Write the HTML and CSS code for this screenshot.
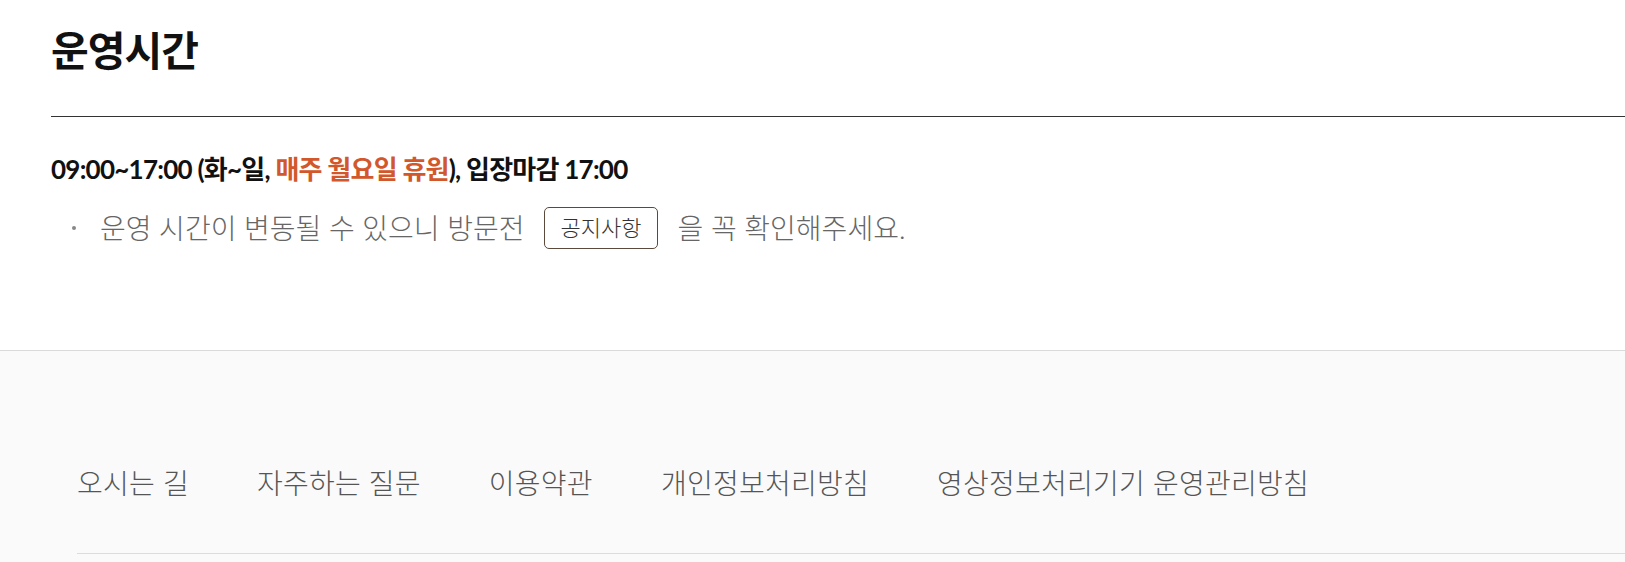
FILE: index.html
```html
<!DOCTYPE html>
<html lang="ko">
<head>
<meta charset="utf-8">
<title>운영시간</title>
<link rel="stylesheet" href="styles.css">
</head>
<body>
<main class="hours">
  <h2 class="hours-title">운영시간</h2>
  <div class="hours-body">
    <p class="hours-main">09:00~17:00 (화~일, <span class="closed">매주 월요일 휴원</span>), 입장마감 17:00</p>
    <ul class="hours-notes">
      <li class="note">운영 시간이 변동될 수 있으니 방문전 <a class="notice-btn" href="#">공지사항</a> 을 꼭 확인해주세요.</li>
    </ul>
  </div>
</main>
<footer class="footer">
  <nav class="footer-nav">
    <a class="footer-link" href="#">오시는 길</a>
    <a class="footer-link" href="#">자주하는 질문</a>
    <a class="footer-link" href="#">이용약관</a>
    <a class="footer-link" href="#">개인정보처리방침</a>
    <a class="footer-link" href="#">영상정보처리기기 운영관리방침</a>
  </nav>
</footer>
</body>
</html>
```
FILE: styles.css
```css
html, body {
  margin: 0;
  padding: 0;
  background: #fff;
}
body {
  font-family: "Lato", "Noto Sans CJK KR", sans-serif;
  color: #111;
  overflow: hidden;
  height: 562px;
}
.hours {
  padding: 22px 0 0 51px;
  height: 328px;
}
.hours-title {
  margin: 0;
  font-size: 41px;
  font-weight: 700;
  line-height: 58px;
  letter-spacing: -1px;
  padding-bottom: 36px;
  border-bottom: 1px solid #333;
}
.hours-body {
  padding-top: 35px;
}
.hours-main {
  margin: 0;
  font-size: 26px;
  font-weight: 700;
  line-height: 34px;
  letter-spacing: -0.75px;
}
.closed {
  color: #d2582b;
}
.hours-notes {
  list-style: none;
  margin: 21px 0 0;
  padding: 0;
}
.note {
  display: flex;
  align-items: center;
  font-size: 28px;
  font-weight: 300;
  color: #666;
  letter-spacing: 0;
  line-height: 42px;
  padding-left: 49px;
  position: relative;
  white-space: pre;
}
.note::before {
  content: "";
  position: absolute;
  left: 21px;
  top: 19px;
  width: 4px;
  height: 4px;
  border-radius: 50%;
  background: #888;
}
.notice-btn {
  display: inline-flex;
  align-items: center;
  justify-content: center;
  margin: 0 12px;
  width: 112px;
  height: 40px;
  border: 1px solid #5b4a3c;
  border-radius: 5px;
  font-size: 22px;
  font-weight: 300;
  color: #333;
  text-decoration: none;
  letter-spacing: 0;
}
.footer {
  background: #fafafa;
  border-top: 1px solid #dadada;
  padding: 0 0 0 77px;
  height: 211px;
}
.footer-nav {
  display: flex;
  gap: 68px;
  padding: 108px 0 46px;
  border-bottom: 1px solid #dcdcdc;
}
.footer-link {
  font-size: 28px;
  color: #555;
  text-decoration: none;
  letter-spacing: 0.25px;
  line-height: 48px;
  font-weight: 300;
}
```
